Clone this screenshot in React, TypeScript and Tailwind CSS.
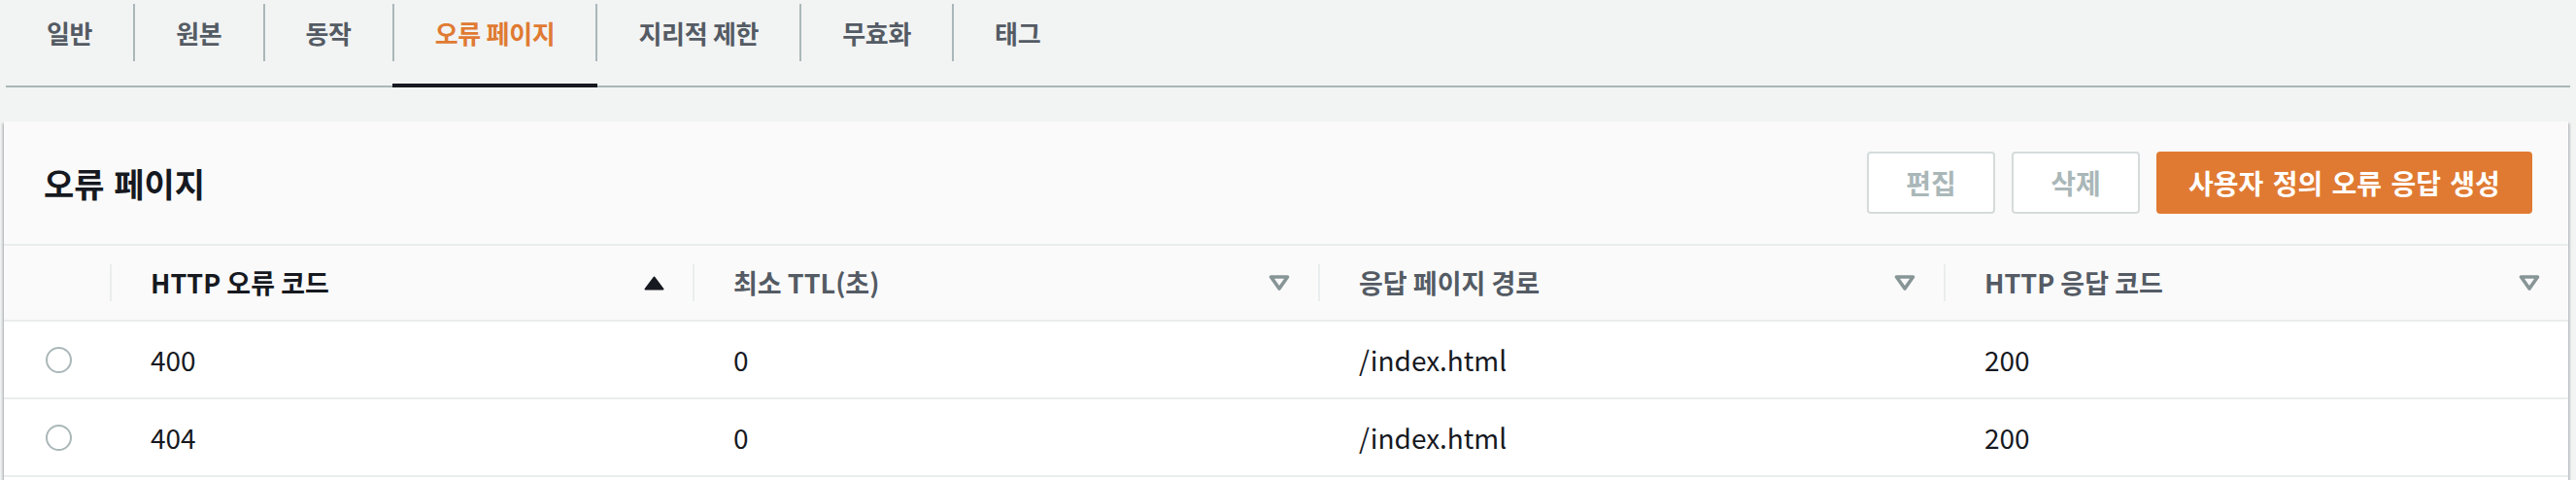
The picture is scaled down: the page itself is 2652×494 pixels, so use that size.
import React from "react";

const tabs = ["일반", "원본", "동작", "오류 페이지", "지리적 제한", "무효화", "태그"];
const ACTIVE = 3;

function SortUp() {
  return (
    <svg width="21" height="15" viewBox="0 0 21 15">
      <path d="M10.5 1.5 L19.5 13.5 L1.5 13.5 Z" fill="#16191f" stroke="#16191f" strokeWidth="2" strokeLinejoin="round" />
    </svg>
  );
}

function SortNone() {
  return (
    <svg width="22" height="16" viewBox="0 0 22 16">
      <path d="M2.5 2 L19.5 2 L11 14 Z" fill="none" stroke="#879596" strokeWidth="3.6" strokeLinejoin="round" />
    </svg>
  );
}

const cols = "grid grid-cols-[109px_600px_644px_644px_1fr]";

function HeadCell({ label, sorted }: { label: string; sorted?: boolean }) {
  return (
    <div className="flex items-center h-full">
      <div className="w-[2px] h-[38px] bg-[#eaeded]" />
      <div className={`flex-1 pl-[40px] pr-[29px] flex items-center justify-between text-[27px] font-bold ${sorted ? "text-[#16191f]" : "text-[#545b64]"}`}>
        <span>{label}</span>
        {sorted ? <SortUp /> : <SortNone />}
      </div>
    </div>
  );
}

function Row({ code, ttl, path, resp }: { code: string; ttl: string; path: string; resp: string }) {
  return (
    <div className={`${cols} h-[80px] border-b-2 border-[#eaeded] bg-white items-center text-[28px] text-[#16191f]`}>
      <div className="pl-[43px] flex items-center">
        <div className="w-[27px] h-[27px] rounded-full border-2 border-[#aab7b8] bg-white" />
      </div>
      <div className="pl-[42px]">{code}</div>
      <div className="pl-[42px]">{ttl}</div>
      <div className="pl-[42px]">{path}</div>
      <div className="pl-[42px]">{resp}</div>
    </div>
  );
}

export default function App() {
  return (
    <div
      className="min-h-screen bg-[#f2f3f3] pl-[4px] pr-[8px] overflow-hidden"
      style={{ fontFamily: '"Noto Sans CJK KR", "Noto Sans", sans-serif' }}
    >
      <div className="ml-[2px] mr-[-2px] h-[90px] border-b-2 border-[#aab7b8] flex items-start">
        {tabs.map((t, i) => (
          <React.Fragment key={t}>
            {i > 0 && <div className="w-[2px] h-[59px] mt-[4px] bg-[#aab7b8]" />}
            <div className="relative h-[88px] px-[42px]">
              <div className={`h-[59px] mt-[4px] flex items-center text-[26px] font-bold tracking-[-0.3px] ${i === ACTIVE ? "text-[#e07a32]" : "text-[#545b64]"}`}>
                {t}
              </div>
              {i === ACTIVE && <div className="absolute left-[-2px] right-[-2px] bottom-[-2px] h-[4px] bg-[#16191f]" />}
            </div>
          </React.Fragment>
        ))}
      </div>

      <div className="mt-[35px] bg-white shadow-[0_2px_2px_0_rgba(0,28,36,0.3),2px_2px_2px_0_rgba(0,28,36,0.15),-2px_2px_2px_0_rgba(0,28,36,0.15)]">
        <div className="h-[128px] bg-[#fafafa] border-b-2 border-[#eaeded] flex items-center justify-between pl-[41px] pr-[37px]">
          <h2 className="text-[34px] font-bold text-[#16191f] [word-spacing:2px]">오류 페이지</h2>
          <div className="flex items-center gap-[17px]">
            <button className="h-[64px] w-[132px] rounded-[4px] border-2 border-[#d5dbdb] bg-white text-[28px] font-bold text-[#aab7b8]">편집</button>
            <button className="h-[64px] w-[132px] rounded-[4px] border-2 border-[#d5dbdb] bg-white text-[28px] font-bold text-[#aab7b8]">삭제</button>
            <button className="h-[64px] w-[387px] rounded-[4px] bg-[#e07a32] text-[28px] font-bold text-white [word-spacing:3px]">사용자 정의 오류 응답 생성</button>
          </div>
        </div>
        <div className={`${cols} h-[78px] bg-[#fafafa] border-b-2 border-[#eaeded]`}>
          <div />
          <HeadCell label="HTTP 오류 코드" sorted />
          <HeadCell label="최소 TTL(초)" />
          <HeadCell label="응답 페이지 경로" />
          <HeadCell label="HTTP 응답 코드" />
        </div>
        <Row code="400" ttl="0" path="/index.html" resp="200" />
        <Row code="404" ttl="0" path="/index.html" resp="200" />
        <div className="h-[80px] bg-white" />
      </div>
    </div>
  );
}
